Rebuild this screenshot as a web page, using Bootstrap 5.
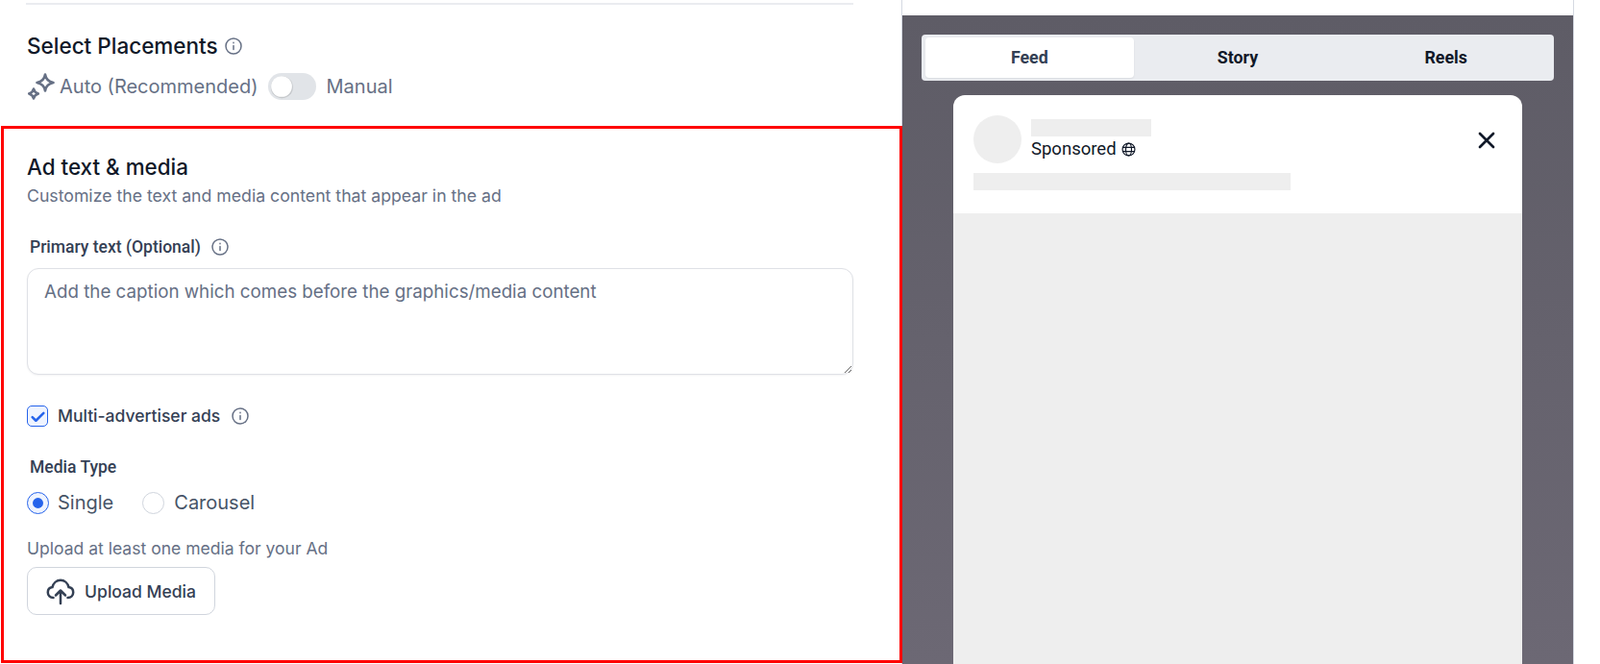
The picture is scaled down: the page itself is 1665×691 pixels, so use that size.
<!DOCTYPE html>
<html lang="en">

<head>
  <meta charset="UTF-8" />
  <title>Ad text &amp; media</title>
  <meta name="viewport" content="width=device-width, initial-scale=1" />
  <link href="https://cdn.jsdelivr.net/npm/bootstrap@5.3.0/dist/css/bootstrap.min.css" rel="stylesheet" />
  <style>
    html,
    body {
      height: 691px;
      overflow: hidden;
    }

    body {
      font-family: Inter, "Liberation Sans", sans-serif;
      background: #fff;
      color: #101828;
    }

    .page-wrap {
      height: 691px;
      padding-right: 27px;
    }

    .left-col {
      width: 938px;
      flex: none;
    }

    .top-block {
      height: 131px;
      padding: 3px 50px 0 27px;
    }

    .top-rule {
      height: 2px;
      background: #eaecf0;
    }

    .place-title {
      font-size: 22.5px;
      font-weight: 500;
      line-height: 28px;
      margin: 29px 0 0 1px;
      color: #101828;
      gap: 6px;
    }

    .place-row {
      margin-top: 14px;
      height: 28px;
      font-size: 20px;
      color: #667085;
    }

    .spark-icon {
      margin: 0 4px 0 1px;
    }

    .place-switch {
      padding: 0;
      margin: 0 11px 0 10px;
      min-height: 0;
    }

    .place-switch .form-check-input {
      width: 50px;
      height: 28px;
      margin: 0;
      float: none;
      display: block;
      background-color: #e1e4e8;
      border: 0;
      box-shadow: none;
      background-image: url("data:image/svg+xml,%3csvg xmlns='http://www.w3.org/2000/svg' viewBox='-4 -4 8 8'%3e%3ccircle r='3.300' fill='%23000' fill-opacity='.12' cy='.2' cx='.1'/%3e%3ccircle r='3.100' fill='%23fff'/%3e%3c/svg%3e");
    }

    .red-box {
      height: 559px;
      margin-left: 1px;
      margin-right: -1px;
      position: relative;
      z-index: 1;
      border: 3px solid #f00;
      padding: 26px 48px 0 24px;
    }

    .sect-title {
      font-size: 22.4px;
      font-weight: 500;
      line-height: 28px;
      margin: 0;
      color: #101828;
    }

    .sect-sub,
    .upload-hint {
      line-height: 24px;
      color: #667085;
      margin: 0;
    }

    .sect-sub {
      font-size: 17.68px;
      margin-top: 4px;
    }

    .field-label {
      font-family: Roboto, "Liberation Sans", sans-serif;
      font-size: 17.5px;
      font-weight: 500;
      line-height: 24px;
      color: #344054;
      margin: 0 0 0 3px;
      gap: 10px;
    }

    .primary-label {
      margin-top: 29px;
    }

    .caption-input {
      height: 111px;
      margin-top: 10px;
      padding: 10px 17px;
      border: 1px solid #dfe1e6;
      border-radius: 12px;
      font-size: 18.750px;
      line-height: 28px;
      font-family: Inter, "Liberation Sans", sans-serif;
      box-shadow: 0 1px 2px rgba(16, 24, 40, .05);
    }

    .caption-input::placeholder {
      color: #667085;
      opacity: 1;
    }

    .check-row {
      margin-top: 32px;
      height: 22px;
    }

    .check-box,
    .check-box:checked {
      width: 22px;
      height: 22px;
      margin: 0;
      flex: none;
      background-color: #eff4ff;
      border: 1px solid #2563eb;
      border-radius: 5px;
      box-shadow: none;
      background-size: 17px;
      background-image: url("data:image/svg+xml,%3csvg xmlns='http://www.w3.org/2000/svg' viewBox='0 0 16 16'%3e%3cpath fill='none' stroke='%232563eb' stroke-width='2.400' stroke-linecap='round' stroke-linejoin='round' d='M2.500 8.500l3.500 3.500 7.500-7.500'/%3e%3c/svg%3e");
    }

    .check-text {
      font-size: 17.5px;
      font-weight: 500;
      color: #344054;
      margin: 0 11px 0 10px;
    }

    .media-label {
      margin-top: 30px;
    }

    .radio-row {
      margin-top: 13px;
      height: 24px;
      font-size: 20px;
      color: #475467;
    }

    .radio-row span {
      margin-left: 10px;
    }

    .radio-btn {
      width: 23px;
      height: 23px;
      margin: 0;
      flex: none;
      border: 1px solid #d0d5dd;
      box-shadow: none;
      background-color: #fff;
    }

    .radio-btn+span+.radio-btn {
      margin-left: 30px;
    }

    .radio-btn:checked {
      background-color: #eff4ff;
      border-color: #2563eb;
      background-size: 23px;
      background-image: url("data:image/svg+xml,%3csvg xmlns='http://www.w3.org/2000/svg' viewBox='-4 -4 8 8'%3e%3ccircle r='1.900' fill='%232563eb'/%3e%3c/svg%3e");
    }

    .radio-btn:checked+span {
      margin-left: 9px;
    }

    .upload-hint {
      font-size: 17.55px;
      margin-top: 24px;
    }

    .upload-btn {
      width: 196px;
      height: 50px;
      margin-top: 7px;
      padding: 2px 0 0;
      gap: 10px;
      border: 1px solid #d0d5dd;
      border-radius: 10px;
      background: #fff;
      color: #344054;
      font-size: 17.500px;
      font-weight: 500;
    }

    .upload-btn svg {
      margin-top: -3px;
    }

    .right-col {
      width: 700px;
      flex: none;
      border-left: 1px solid #d5d9e2;
      border-right: 1px solid #d5d9e2;
      padding-top: 16px;
    }

    .dark-panel {
      height: 675px;
      padding: 20px 20px 0;
      background: linear-gradient(#5e5c66, #6c6874);
    }

    .tab-strip {
      height: 48px;
      padding: 3px 4px;
      background: #eaecf0;
      border-radius: 4px;
    }

    .tab-item {
      font-family: Roboto, "Liberation Sans", sans-serif;
      font-size: 17.8px;
      font-weight: 700;
      line-height: 42px;
      color: #101828;
      text-align: center;
      border-radius: 4px;
      flex: 1 1 0;
    }

    .tab-item.is-on {
      background: #fff;
      color: #344054;
      box-shadow: 0 1px 2px rgba(16, 24, 40, .08);
    }

    .ad-card {
      width: 592px;
      height: 600px;
      margin: 15px auto 0;
      background: #fff;
      border-radius: 12px 12px 0 0;
      overflow: hidden;
    }

    .ad-head {
      height: 123px;
      padding: 21px 21px 0;
    }

    .ph-fill {
      background: #eee;
    }

    .ph-avatar {
      width: 50px;
      height: 50px;
      border-radius: 50%;
      flex: none;
    }

    .ad-meta {
      margin-left: 10px;
    }

    .ph-name {
      width: 125px;
      height: 18px;
      margin-top: 4px;
    }

    .ph-line {
      width: 330px;
      height: 18px;
      margin-top: 10px;
    }

    .sponsor-text {
      font-family: Roboto, "Liberation Sans", sans-serif;
      font-size: 18.500px;
      line-height: 26px;
      color: #101828;
      gap: 5px;
    }

    .close-icon {
      margin: 16px 6px 0 0;
    }
  </style>
</head>

<body>
  <div class="page-wrap d-flex">
    <div class="left-col">
      <div class="top-block">
        <div class="top-rule"></div>
        <div class="place-title d-flex align-items-center">Select Placements
          <svg width="20" height="20" viewBox="0 0 20 20" fill="none" stroke="#667085" stroke-width="1.5">
            <circle cx="10" cy="10" r="8" />
            <path d="M10 9.500v4M10 6.200v.6" stroke-linecap="round" />
          </svg>
        </div>
        <div class="place-row d-flex align-items-center">
          <svg class="spark-icon" width="30" height="30" viewBox="0 0 30 30" fill="none" stroke="#667085" stroke-width="2.600" stroke-linejoin="round">
            <path d="M19 2.500Q20 9.500 27.500 11 20 12.500 19 19.500 18 12.500 10.500 11 18 9.500 19 2.500z" />
            <path d="M7 17.500Q7.800 21.200 11.800 22.500 7.800 23.800 7 27.500 6.200 23.800 2.200 22.500 6.200 21.200 7 17.500z" />
          </svg>
          <span>Auto (Recommended)</span>
          <div class="form-check form-switch place-switch">
            <input class="form-check-input" type="checkbox" role="switch" aria-label="Manual placements">
          </div>
          <span>Manual</span>
        </div>
      </div>

      <div class="red-box">
        <h2 class="sect-title">Ad text &amp; media</h2>
        <p class="sect-sub">Customize the text and media content that appear in the ad</p>

        <div class="d-flex align-items-center field-label primary-label">Primary text (Optional)
          <svg width="20" height="20" viewBox="0 0 20 20" fill="none" stroke="#667085" stroke-width="1.5">
            <circle cx="10" cy="10" r="8" />
            <path d="M10 9.500v4M10 6.200v.6" stroke-linecap="round" />
          </svg>
        </div>
        <textarea class="form-control caption-input" placeholder="Add the caption which comes before the graphics/media content"></textarea>

        <div class="check-row d-flex align-items-center">
          <input class="form-check-input check-box" type="checkbox" checked aria-label="Multi-advertiser ads">
          <span class="check-text">Multi-advertiser ads</span>
          <svg width="20" height="20" viewBox="0 0 20 20" fill="none" stroke="#667085" stroke-width="1.5">
            <circle cx="10" cy="10" r="8" />
            <path d="M10 9.500v4M10 6.200v.6" stroke-linecap="round" />
          </svg>
        </div>

        <div class="field-label media-label">Media Type</div>
        <div class="radio-row d-flex align-items-center">
          <input class="form-check-input radio-btn" type="radio" name="mediaType" checked aria-label="Single">
          <span>Single</span>
          <input class="form-check-input radio-btn" type="radio" name="mediaType" aria-label="Carousel">
          <span>Carousel</span>
        </div>

        <p class="upload-hint">Upload at least one media for your Ad</p>
        <button type="button" class="btn upload-btn d-flex align-items-center justify-content-center">
          <svg width="30" height="30" viewBox="0 0 30 30" fill="none" stroke="#344054" stroke-width="2.500" stroke-linecap="round" stroke-linejoin="round">
            <path d="M7.500 22C4 22 1.800 19.500 1.800 16.500 1.800 13.700 3.800 11.500 6.500 11.100 7.500 6.800 10.800 3.800 15 3.800s7.500 3 8.500 7.300c2.700.4 4.700 2.600 4.700 5.400 0 3-2.200 5.500-5.700 5.500" />
            <path d="M15 28V14.500M10 19.500L15 14.500l5 5" />
          </svg>
          Upload Media
        </button>
      </div>
    </div>

    <div class="right-col">
      <div class="dark-panel">
        <div class="tab-strip d-flex">
          <div class="tab-item is-on">Feed</div>
          <div class="tab-item">Story</div>
          <div class="tab-item">Reels</div>
        </div>
        <div class="ad-card d-flex flex-column">
          <div class="ad-head">
            <div class="d-flex">
              <div class="ph-fill ph-avatar"></div>
              <div class="ad-meta flex-grow-1">
                <div class="ph-fill ph-name"></div>
                <div class="sponsor-text d-flex align-items-center">Sponsored
                  <svg width="15" height="15" viewBox="0 0 14 14" fill="none" stroke="#101828" stroke-width="1.100">
                    <circle cx="7" cy="7" r="6" />
                    <ellipse cx="7" cy="7" rx="2.800" ry="6" />
                    <path d="M1 5h12M1 9h12" />
                  </svg>
                </div>
              </div>
              <svg class="close-icon" width="20" height="20" viewBox="0 0 20 20" fill="none" stroke="#101828" stroke-width="2.700" stroke-linecap="round">
                <path d="M3 3l14 14M17 3L3 17" />
              </svg>
            </div>
            <div class="ph-fill ph-line"></div>
          </div>
          <div class="ph-fill flex-grow-1"></div>
        </div>
      </div>
    </div>
  </div>
  <script src="https://cdn.jsdelivr.net/npm/bootstrap@5.3.0/dist/js/bootstrap.bundle.min.js"></script>
</body>

</html>
